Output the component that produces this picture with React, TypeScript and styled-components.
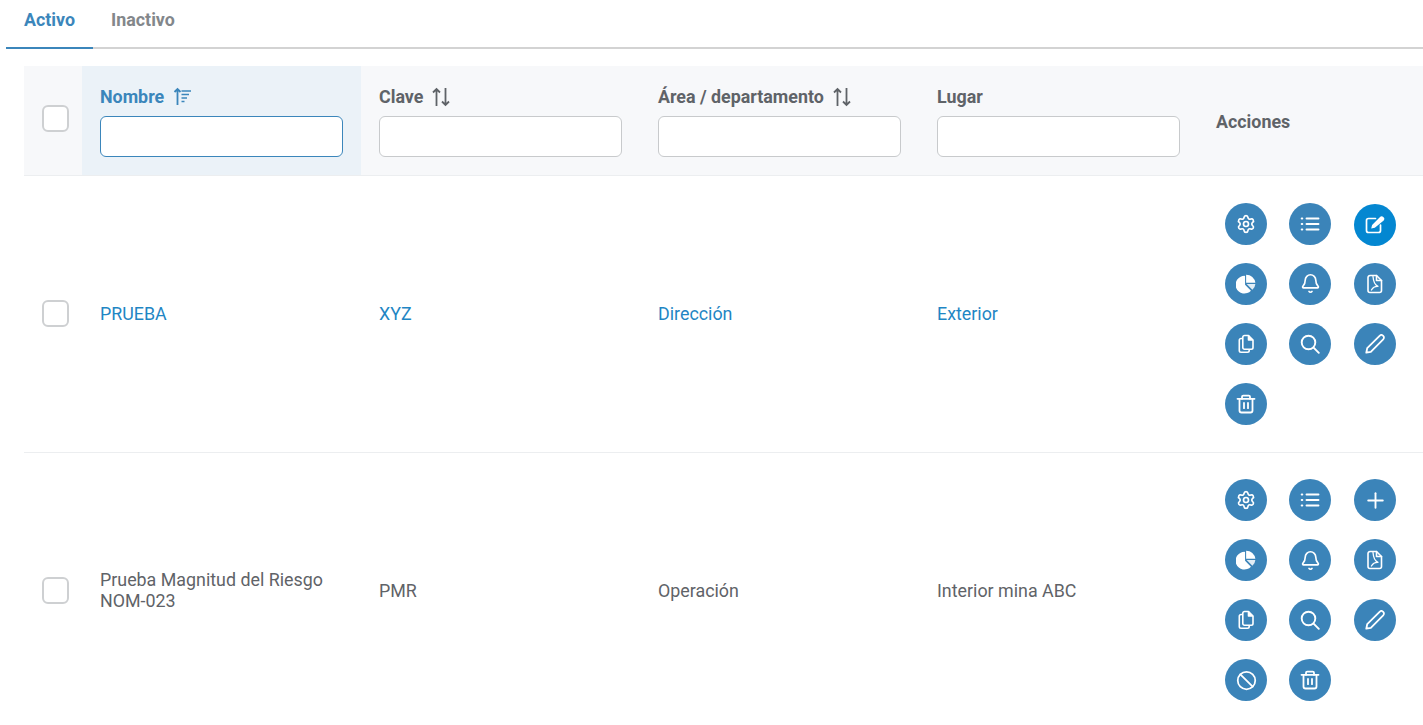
import React from 'react'
import styled, { createGlobalStyle } from 'styled-components'
import { Settings, Bell, Ban, Plus } from 'lucide-react'

const GlobalStyle = createGlobalStyle`
  html, body {
    margin: 0;
    padding: 0;
    background: #fff;
    overflow: hidden;
    font-family: Roboto, "Liberation Sans", sans-serif;
    color: #5f6368;
  }
`

const Page = styled.div`
  width: 1423px;
  height: 725px;
  overflow: hidden;
`

const TabBar = styled.div`
  display: flex;
  margin-left: 6px;
  height: 47px;
  border-bottom: 2px solid #d3d3d3;
`

const Tab = styled.div<{ $active?: boolean }>`
  padding: 0 18px;
  height: 49px;
  box-sizing: border-box;
  line-height: 40px;
  font-size: 17.85px;
  font-weight: 700;
  color: ${(p) => (p.$active ? '#3b86bb' : '#83878b')};
  border-bottom: 2px solid ${(p) => (p.$active ? '#3b86bb' : 'transparent')};
`

const Table = styled.table`
  margin: 17px 0 0 24px;
  width: 1399px;
  table-layout: fixed;
  border-collapse: collapse;
  border-spacing: 0;
`

const HeadCell = styled.th<{ $sorted?: boolean }>`
  height: 109px;
  padding: 0 18px;
  box-sizing: border-box;
  background: ${(p) => (p.$sorted ? '#ebf2f8' : '#f7f8fa')};
  border-bottom: 1px solid #eceef0;
  text-align: left;
  vertical-align: middle;
`

const HeadLabel = styled.div<{ $sorted?: boolean }>`
  display: flex;
  align-items: center;
  gap: 8px;
  height: 20px;
  margin: 3px 0 9px;
  font-size: 17.85px;
  font-weight: 700;
  color: ${(p) => (p.$sorted ? '#3b86bb' : '#5f6368')};
`

const ActionsLabel = styled.div`
  margin-top: 3px;
  font-size: 17.85px;
  font-weight: 700;
  color: #5f6368;
`

const FilterInput = styled.input<{ $focused?: boolean }>`
  display: block;
  width: 100%;
  height: 41px;
  box-sizing: border-box;
  background: #fff;
  border: 1px solid ${(p) => (p.$focused ? '#3b86bb' : '#c8cacc')};
  border-radius: 6px;
  outline: none;
`

const Check = styled.div`
  width: 27px;
  height: 27px;
  box-sizing: border-box;
  background: #fff;
  border: 2px solid #ced0d2;
  border-radius: 6px;
`

const CheckCell = styled.td`
  padding: 0 0 0 18px;
  vertical-align: middle;
`

const HeadCheckCell = styled(HeadCell)`
  padding: 0 0 3px 18px;
`

const Row = styled.tr`
  border-bottom: 1px solid #eceef0;

  &:last-child > td {
    height: 275px;
  }
`

const Cell = styled.td<{ $link?: boolean }>`
  height: 277px;
  padding: 0 18px;
  box-sizing: border-box;
  font-size: 17.85px;
  line-height: 21px;
  color: ${(p) => (p.$link ? '#1f86c4' : '#5f6368')};
  vertical-align: middle;
`

const ActionsCell = styled.td`
  padding: 0 0 0 27px;
  vertical-align: middle;
`

const ActionGrid = styled.div`
  display: grid;
  grid-template-columns: 42px 43px 42px;
  column-gap: 22px;
  row-gap: 18px;
`

const ActionButton = styled.div<{ $bright?: boolean }>`
  width: 42px;
  height: 42px;
  border-radius: 50%;
  display: flex;
  align-items: center;
  justify-content: center;
  color: #fff;
  background: ${(p) => (p.$bright ? '#0487d1' : '#3b84b9')};
  transform: ${(p) => (p.$bright ? 'translateY(1px)' : 'none')};
`

const SortIcon = () => (
  <svg width="20" height="20" viewBox="0 0 20 20" fill="none" stroke="currentColor" strokeWidth="1.8">
    <path d="M5.5 19V2M2 5.5L5.5 2L9 5.5" />
    <path d="M14.5 1V18M11 14.5L14.5 18L18 14.5" />
  </svg>
)

const SortedIcon = () => (
  <svg width="20" height="20" viewBox="0 0 20 20" fill="none" stroke="currentColor" strokeWidth="1.4">
    <path d="M5.5 18V2M2.5 5L5.5 2L8.5 5" strokeWidth="1.8" />
    <path d="M9.5 4H19M9.5 7.5H17M9.5 11H15M9.5 14.5H12.5" />
  </svg>
)

const ListIcon = () => (
  <svg width="20" height="20" viewBox="0 0 20 20" fill="none" stroke="currentColor" strokeWidth="1.9" strokeLinecap="round">
    <path d="M6.5 4.5H18.5M6.5 10H18.5M6.5 15.5H18.5" />
    <path d="M1.8 4.5H2.2M1.8 10H2.2M1.8 15.5H2.2" strokeWidth="2.2" />
  </svg>
)

const EditSquareIcon = () => (
  <svg width="20" height="20" viewBox="0 0 20 20" fill="none" stroke="currentColor" strokeWidth="1.7" strokeLinecap="round">
    <path d="M10.5 3.5H3.5A2 2 0 0 0 1.5 5.5V15.5A2 2 0 0 0 3.5 17.5H13.5A2 2 0 0 0 15.5 15.5V10" />
    <path d="M6.2 13.6L7.1 10L14.8 2.3A1.7 1.7 0 0 1 18.7 5.4L9.8 12.8Z" fill="currentColor" stroke="none" />
  </svg>
)

const PieIcon = () => (
  <svg width="20" height="20" viewBox="0 0 19 19" fill="currentColor">
    <path d="M8.6 1.8V10.2L14.2 15.8A8.4 8.4 0 1 1 8.6 1.8Z" />
    <path d="M9.6 0.6A8.7 8.7 0 0 1 18.4 8.4H9.6Z" />
    <path d="M10.1 9.4H18.4A8.6 8.6 0 0 1 15.6 15Z" opacity="0.85" />
  </svg>
)

const PdfIcon = () => (
  <svg width="20" height="20" viewBox="0 0 20 20" fill="none" stroke="currentColor" strokeWidth="1.6" strokeLinejoin="round" strokeLinecap="round">
    <path d="M5 1.5H11.5L16.5 6.5V16.5A2 2 0 0 1 14.5 18.5H5A2 2 0 0 1 3 16.5V3.5A2 2 0 0 1 5 1.5Z" />
    <path d="M11.5 1.5V6.5H16.5" />
    <path d="M8 2.5C8.4 7.5 9.6 11 13 12.3C10.5 12.2 8 13 6.4 16" strokeWidth="1.3" />
  </svg>
)

const CopyIcon = () => (
  <svg width="20" height="20" viewBox="0 0 20 20" fill="none" stroke="currentColor" strokeWidth="1.6" strokeLinejoin="round">
    <path d="M8.5 1.5H12.5L17 6V13.5A1.7 1.7 0 0 1 15.3 15.2H8.5A1.7 1.7 0 0 1 6.8 13.5V3.2A1.7 1.7 0 0 1 8.5 1.5Z" />
    <path d="M12.5 1.5V6H17" fill="currentColor" />
    <path d="M6.8 4.5H5A1.7 1.7 0 0 0 3.3 6.2V16.5A1.7 1.7 0 0 0 5 18.2H11.5A1.7 1.7 0 0 0 13.2 16.5V15.2" />
  </svg>
)

const SearchIcon = () => (
  <svg width="20" height="20" viewBox="0 0 20 20" fill="none" stroke="currentColor" strokeWidth="1.9" strokeLinecap="round">
    <circle cx="8.5" cy="8.5" r="6.8" />
    <path d="M13.6 13.6L18.8 18.8" />
  </svg>
)

const PenIcon = () => (
  <svg width="20" height="20" viewBox="0 0 20 20" fill="none" stroke="currentColor" strokeWidth="1.8" strokeLinejoin="round" strokeLinecap="round">
    <path d="M1.3 18.7L2.2 14.2L14.6 1.8A2.3 2.3 0 0 1 18.2 5.4L5.8 17.8Z" />
  </svg>
)

const TrashIcon = () => (
  <svg width="20" height="20" viewBox="0 0 20 20" fill="none" stroke="currentColor" strokeWidth="1.8" strokeLinecap="round" strokeLinejoin="round">
    <path d="M1.5 4.8H18.5" />
    <path d="M6 4.8V2.8A1.2 1.2 0 0 1 7.2 1.6H12.8A1.2 1.2 0 0 1 14 2.8V4.8" />
    <path d="M3.5 4.8V16.5A2 2 0 0 0 5.5 18.5H14.5A2 2 0 0 0 16.5 16.5V4.8" />
    <path d="M8 9V14.2M12 9V14.2" />
  </svg>
)

const Gear = () => <Settings size={20} strokeWidth={2} />
const BellIcon = () => <Bell size={21} strokeWidth={1.9} />

const rows = [
  {
    name: 'PRUEBA',
    code: 'XYZ',
    area: 'Dirección',
    place: 'Exterior',
    link: true,
    actions: [
      <Gear />, <ListIcon />, <EditSquareIcon />,
      <PieIcon />, <BellIcon />, <PdfIcon />,
      <CopyIcon />, <SearchIcon />, <PenIcon />,
      <TrashIcon />,
    ],
  },
  {
    name: 'Prueba Magnitud del Riesgo NOM-023',
    code: 'PMR',
    area: 'Operación',
    place: 'Interior mina ABC',
    link: false,
    actions: [
      <Gear />, <ListIcon />, <Plus size={25} strokeWidth={1.8} />,
      <PieIcon />, <BellIcon />, <PdfIcon />,
      <CopyIcon />, <SearchIcon />, <PenIcon />,
      <Ban size={21} strokeWidth={2} />, <TrashIcon />,
    ],
  },
]

export default function App() {
  return (
    <Page>
      <GlobalStyle />
      <TabBar>
        <Tab $active>Activo</Tab>
        <Tab>Inactivo</Tab>
      </TabBar>
      <Table>
        <colgroup>
          <col style={{ width: 58 }} />
          <col style={{ width: 279 }} />
          <col style={{ width: 279 }} />
          <col style={{ width: 279 }} />
          <col style={{ width: 279 }} />
          <col style={{ width: 225 }} />
        </colgroup>
        <thead>
          <tr>
            <HeadCheckCell><Check /></HeadCheckCell>
            <HeadCell $sorted>
              <HeadLabel $sorted>Nombre <SortedIcon /></HeadLabel>
              <FilterInput $focused />
            </HeadCell>
            <HeadCell>
              <HeadLabel>Clave <SortIcon /></HeadLabel>
              <FilterInput />
            </HeadCell>
            <HeadCell>
              <HeadLabel>Área / departamento <SortIcon /></HeadLabel>
              <FilterInput />
            </HeadCell>
            <HeadCell>
              <HeadLabel>Lugar</HeadLabel>
              <FilterInput />
            </HeadCell>
            <HeadCell><ActionsLabel>Acciones</ActionsLabel></HeadCell>
          </tr>
        </thead>
        <tbody>
          {rows.map((row) => (
            <Row key={row.code}>
              <CheckCell><Check /></CheckCell>
              <Cell $link={row.link}>{row.name}</Cell>
              <Cell $link={row.link}>{row.code}</Cell>
              <Cell $link={row.link}>{row.area}</Cell>
              <Cell $link={row.link}>{row.place}</Cell>
              <ActionsCell>
                <ActionGrid>
                  {row.actions.map((a, i) => (
                    <ActionButton key={i} $bright={row.link && i === 2}>{a}</ActionButton>
                  ))}
                </ActionGrid>
              </ActionsCell>
            </Row>
          ))}
        </tbody>
      </Table>
    </Page>
  )
}
